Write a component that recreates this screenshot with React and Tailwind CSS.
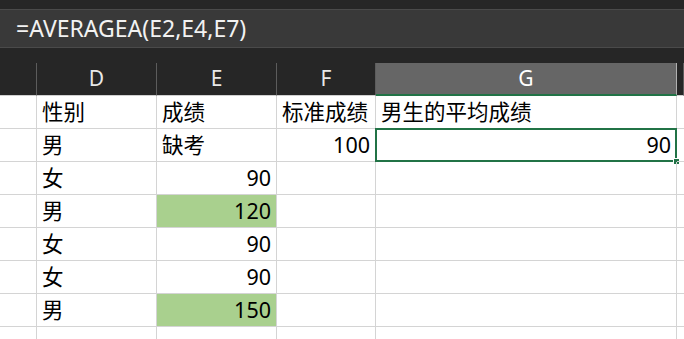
const cols = [37, 120, 120, 99, 301, 7];

const rows = [
  ['', '性别', '成绩', '标准成绩', '男生的平均成绩'],
  ['', '男', '缺考', '100', '90'],
  ['', '女', '90', '', ''],
  ['', '男', '120', '', ''],
  ['', '女', '90', '', ''],
  ['', '女', '90', '', ''],
  ['', '男', '150', '', ''],
  ['', '', '', '', ''],
];

const isNum = (v) => /^\d+$/.test(v);

export default function App() {
  return (
    <div
      className="w-[684px] h-[339px] overflow-hidden bg-white"
      style={{ fontFamily: '"Noto Sans", "Noto Sans CJK SC", sans-serif' }}
    >
      <div className="h-[9px] bg-[#262626]" />
      <div className="h-[39px] bg-[#393939] border-t border-b border-[#4a4a4a] flex items-center pl-[16px] text-[23px] text-[#f2f2f2]">
        =AVERAGEA(E2,E4,E7)
      </div>
      <div className="h-[15px] bg-[#262626]" />
      <div className="flex h-[33px] bg-[#262626] text-[21px] text-[#e8e8e8]">
        {['', 'D', 'E', 'F', 'G', ''].map((c, i) => (
          <div
            key={i}
            style={{ width: cols[i] }}
            className={
              i === 4
                ? 'shrink-0 flex items-center justify-center bg-[#666666] border-b-2 border-[#217346] border-r border-r-[#b0b0b0] text-white'
                : 'shrink-0 flex items-center justify-center border-r border-[#5c5c5c] border-b border-b-[#d0d0d0]'
            }
          >
            {c}
          </div>
        ))}
      </div>
      {rows.map((r, ri) => (
        <div key={ri} className="flex h-[33px] text-[21.5px] text-black">
          {[...r, ''].map((v, ci) => {
            const green = ci === 2 && (v === '120' || v === '150');
            const sel = ri === 1 && ci === 4;
            return (
              <div
                key={ci}
                style={{ width: cols[ci] }}
                className={
                  'shrink-0 relative flex items-center px-[5px] border-r border-b border-[#d4d4d4] ' +
                  (isNum(v) ? 'justify-end ' : 'justify-start ') +
                  (green ? 'bg-[#a9d08e]' : '')
                }
              >
                <span className="leading-none">{v}</span>
                {sel && (
                  <>
                    <div className="absolute -left-[1px] -top-[1px] right-[-1px] bottom-[-1px] border-2 border-[#217346]" />
                    <div className="absolute right-[-4px] bottom-[-4px] w-[7px] h-[7px] bg-[#217346] border border-white" />
                  </>
                )}
              </div>
            );
          })}
        </div>
      ))}
    </div>
  );
}
